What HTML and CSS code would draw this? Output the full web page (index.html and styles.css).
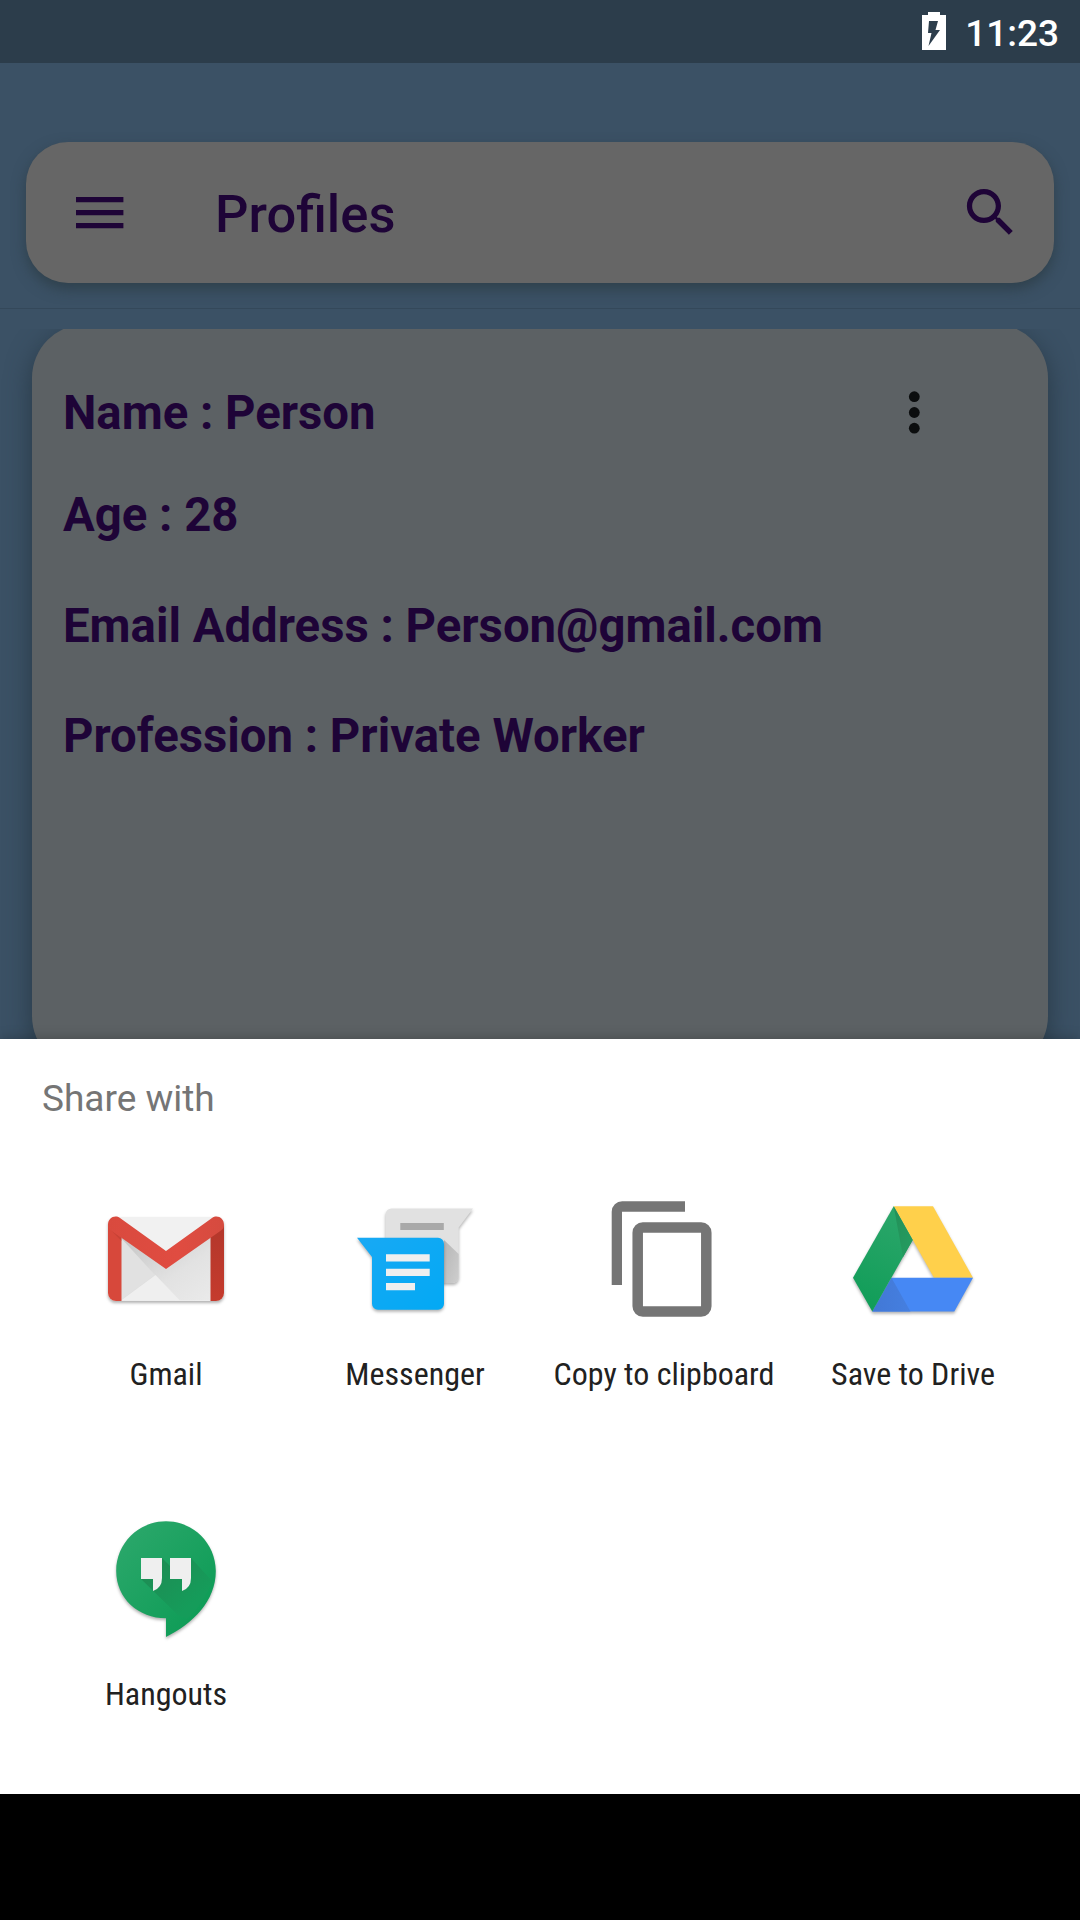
FILE: index.html
```html
<!DOCTYPE html>
<html lang="en">
<head>
<meta charset="utf-8">
<title>Profiles</title>
<link rel="stylesheet" href="styles.css">
</head>
<body>
<div class="screen">
  <div class="status-bar">
    <svg class="battery" width="24" height="38" viewBox="0 0 24 38"><path fill="#fff" fill-rule="evenodd" d="M6 0h12v3h6v35H0V3h6zM7 9h9l-2.500 9h4.500L6.500 34l3-13H6z"/></svg>
    <span class="clock">11:23</span>
  </div>
  <header class="app-bar">
    <div class="toolbar">
      <svg class="menu-icon" width="48" height="32" viewBox="0 0 48 32"><path fill="#1e0437" d="M0 0h47.4v5.2H0zM0 13h47.4v5.2H0zM0 26h47.4v5.2H0z"/></svg>
      <h1 class="title">Profiles</h1>
      <svg class="search-icon" width="63" height="63" viewBox="0 0 24 24"><path fill="#1e0437" d="M15.5 14h-.79l-.28-.27C15.41 12.59 16 11.11 16 9.5 16 5.91 13.09 3 9.5 3S3 5.91 3 9.5 5.91 16 9.5 16c1.61 0 3.09-.59 4.23-1.57l.27.28v.79l5 4.99L20.49 19l-4.99-5zm-6 0C7.01 14 5 11.99 5 9.5S7.01 5 9.5 5 14 7.01 14 9.5 11.99 14 9.5 14z"/></svg>
    </div>
  </header>
  <main class="list">
    <article class="card">
      <div class="card-head">
        <p>Name : Person</p>
        <svg class="more-icon" width="12" height="44" viewBox="0 0 12 44"><g fill="#0b0d0e"><circle cx="6.300" cy="5.7" r="5.4"/><circle cx="6.300" cy="21.5" r="5.4"/><circle cx="6.300" cy="37.2" r="5.4"/></g></svg>
      </div>
      <p class="age">Age : 28</p>
      <p class="email">Email Address : Person@gmail.com</p>
      <p class="job">Profession : Private Worker</p>
    </article>
  </main>
  <section class="sheet">
    <h2 class="sheet-title">Share with</h2>
    <div class="targets">
      <div class="target">
        <svg class="icon" viewBox="0 0 144 144">
          <defs>
            <linearGradient id="gmFlap" x1="0" y1="0" x2="1" y2="0"><stop offset="0" stop-color="#d94a3e"/><stop offset=".6" stop-color="#e04c41"/><stop offset="1" stop-color="#d54b3f"/></linearGradient>
            <linearGradient id="gmRight" x1="0" y1="0" x2="0" y2="1"><stop offset="0" stop-color="#b3372b"/><stop offset="1" stop-color="#c53b2d"/></linearGradient>
            <linearGradient id="gmFold" x1="0" y1="0" x2="1" y2="1"><stop offset="0" stop-color="#c4c4c4"/><stop offset=".6" stop-color="#e2e2e2"/><stop offset="1" stop-color="#eaeaea"/></linearGradient>
          </defs>
          <g class="drop">
            <rect x="14" y="30" width="116" height="84" rx="8" fill="#f1f1f1"/>
            <path fill="url(#gmFold)" d="M27 50L72 81L117 50V113.5H27z"/>
            <path fill="#e1e1e1" d="M27 51L61 88L27 113z"/>
            <path fill="#efefef" d="M27 113.5L61.5 88L86 113.5z"/>
            <path fill="#d7483b" d="M14 38h13.5v76H22a8 8 0 0 1-8-8z"/>
            <path fill="url(#gmRight)" d="M116.500 50L130 38v68a8 8 0 0 1-8 8h-5.500z"/>
            <path fill="#b73b30" opacity=".5" d="M15 41l12.500 10v3z"/>
            <path fill="url(#gmFlap)" d="M14 38C14 30.500 21 27.500 26 31L72 64L118 31C123 27.500 130 30.500 130 38C130 40.500 129 42 127 43.500L72 82L17 43.500C15 42 14 40.500 14 38z"/>
          </g>
        </svg>
        <span class="label">Gmail</span>
      </div>
      <div class="target">
        <svg class="icon" viewBox="0 0 144 144">
          <defs>
            <linearGradient id="msShade" x1="0" y1="0" x2="1" y2="1"><stop offset="0" stop-color="#b5b5b5"/><stop offset="1" stop-color="#cecece"/></linearGradient>
            <linearGradient id="msBlue" x1="0" y1="0" x2="1" y2="1"><stop offset="0" stop-color="#18a9f4"/><stop offset="1" stop-color="#03a9f4"/></linearGradient>
          </defs>
          <g class="drop">
            <path fill="#e1e1e1" d="M48.500 21.600H130L115.700 40.500V90a6 6 0 0 1-6 6H42.500V27.600a6 6 0 0 1 6-6z"/>
            <path fill="url(#msShade)" d="M101 53L115.700 67V90a6 6 0 0 1-6 6H101z"/>
            <path fill="#a9a9a9" d="M57.300 36h43.500v7H57.300z"/>
          </g>
          <g class="drop">
            <path fill="url(#msBlue)" d="M14 50.700h81a6 6 0 0 1 6 6V116.700a6 6 0 0 1-6 6H35a6 6 0 0 1-6-6V70z"/>
            <path fill="#efefef" d="M43 67.300h43.700v7.300H43zM43 81.700h43.700V89H43zM43 96h29v7.300H43z"/>
          </g>
        </svg>
        <span class="label">Messenger</span>
      </div>
      <div class="target">
        <svg class="icon" viewBox="0 0 144 144">
          <path fill="#757575" d="M93 14.300V24.700H30V98H19.700V24.700A10.500 10.500 0 0 1 30.200 14.300z"/>
          <rect x="45.700" y="40.500" width="68.600" height="84" rx="5.200" fill="none" stroke="#757575" stroke-width="10.500"/>
        </svg>
        <span class="label">Copy to clipboard</span>
      </div>
      <div class="target">
        <svg class="icon" viewBox="0 0 144 144">
          <defs>
            <linearGradient id="drGreen" x1=".6" y1="0" x2=".3" y2="1"><stop offset="0" stop-color="#2ba66a"/><stop offset="1" stop-color="#109d58"/></linearGradient>
            <linearGradient id="drDark" x1="0" y1="0" x2="1" y2="1"><stop offset="0" stop-color="#239058"/><stop offset="1" stop-color="#259d61"/></linearGradient>
            <linearGradient id="drFold" x1="0" y1="0" x2="1" y2="0"><stop offset="0" stop-color="#4278d6"/><stop offset="1" stop-color="#457fe0"/></linearGradient>
          </defs>
          <g class="drop">
            <path fill="#ffd04b" d="M52.700 19.300H92L132 90.700H93z"/>
            <path fill="#4688f4" d="M50.500 90.700H132L113.300 124.500H31.300z"/>
            <path fill="url(#drFold)" d="M50.500 90.700L69.500 124.500H31.300z"/>
            <path fill="url(#drGreen)" d="M52.700 19.300L71.700 53L31.300 124.500L12 90.700z"/>
            <path fill="url(#drDark)" d="M52.700 19.300L71.700 53L62 70z"/>
          </g>
        </svg>
        <span class="label">Save to Drive</span>
      </div>
      <div class="target">
        <svg class="icon" viewBox="0 0 144 144">
          <defs>
            <linearGradient id="hgBody" x1="0" y1="0" x2="1" y2="1"><stop offset=".1" stop-color="#2aa76a"/><stop offset=".8" stop-color="#109d58"/></linearGradient>
            <linearGradient id="hgCast" gradientUnits="userSpaceOnUse" x1="55" y1="60" x2="92" y2="102"><stop offset="0" stop-color="#1e8c54"/><stop offset="1" stop-color="#159c5a"/></linearGradient>
          </defs>
          <g class="drop">
            <path fill="url(#hgBody)" d="M72 14.300C99.500 14.300 121.800 36.500 121.800 64C121.800 94 99 116.500 72 130V111.300C44.500 111.300 22.200 91.500 22.200 64C22.200 36.500 44.500 14.300 72 14.300z"/>
            <path fill="url(#hgCast)" d="M47 72L68 51L76 59V51H97L118 74Q111 95 93 112L84 108z"/>
            <path fill="#efefef" d="M47 51h21v20q0 10-9 13V72H47zM76 51h21v20q0 10-9 13V72H76z"/>
          </g>
        </svg>
        <span class="label">Hangouts</span>
      </div>
    </div>
  </section>
  <div class="nav-bar"></div>
</div>
</body>
</html>
```
FILE: styles.css
```css
* { box-sizing: border-box; }
body, h1, h2, p { margin: 0; }
body { background: #000; font-family: Roboto, "Noto Sans", sans-serif; }

.screen {
  width: 1080px;
  height: 1920px;
  display: flex;
  flex-direction: column;
  background: #3b5165;
  overflow: hidden;
}

.status-bar {
  height: 63px;
  flex: none;
  display: flex;
  justify-content: flex-end;
  align-items: flex-start;
  gap: 19px;
  padding: 12px 21px 0 0;
  background: #2c3d4b;
}
.battery { flex: none; }
.clock {
  color: #fff;
  font-size: 37px;
  font-weight: 500;
  line-height: 43px;
}

.app-bar {
  height: 246px;
  flex: none;
  padding: 79px 26px 0;
  border-bottom: 1px solid #34485a;
}
.toolbar {
  height: 141px;
  display: flex;
  align-items: center;
  padding: 0 32px 0 50px;
  border-radius: 42px;
  background: #666;
  box-shadow: 0 6px 14px rgba(40, 55, 62, .65);
}
.menu-icon { flex: none; }
.title {
  flex: 1;
  margin-left: 91px;
  padding-top: 2px;
  color: #1e0437;
  font-size: 52.5px;
  font-weight: 500;
  line-height: 60px;
}
.search-icon { flex: none; }

.list {
  height: 710px;
  flex: none;
  margin-top: 20px;
  padding: 0 32px;
  overflow: hidden;
}
.card {
  height: 746px;
  margin-top: -5px;
  padding: 61px 128px 0 31px;
  border-radius: 54px;
  background: #5c6164;
  box-shadow: 0 8px 26px rgba(38, 54, 66, .9);
  color: #1e0437;
  font-size: 47.3px;
  font-weight: 700;
  line-height: 56px;
  white-space: nowrap;
}
.card-head {
  display: flex;
  justify-content: space-between;
  align-items: center;
}
.age { margin-top: 46px; }
.email { margin-top: 55px; }
.job { margin-top: 54px; }

.sheet {
  position: relative;
  height: 755px;
  flex: none;
  padding: 38px 42px 0;
  background: #fff;
  box-shadow: 0 0 12px rgba(0, 0, 0, .25);
}
.sheet-title {
  color: #757575;
  font-size: 37px;
  font-weight: 400;
  line-height: 43px;
}
.targets {
  display: grid;
  grid-template-columns: repeat(4, 248px);
  grid-auto-rows: 320px;
  column-gap: 1px;
  margin-top: 67px;
}
.target {
  display: flex;
  flex-direction: column;
  align-items: center;
}
.icon { width: 144px; height: 144px; flex: none; }
.drop { filter: drop-shadow(0 2px 1.5px rgba(0, 0, 0, .3)); }
.label {
  margin-top: 24px;
  color: #212121;
  font-family: "Roboto Condensed", Roboto, sans-serif;
  font-stretch: 75%;
  font-size: 32px;
  line-height: 38px;
  white-space: nowrap;
}

.nav-bar { flex: 1; background: #000; }
```
